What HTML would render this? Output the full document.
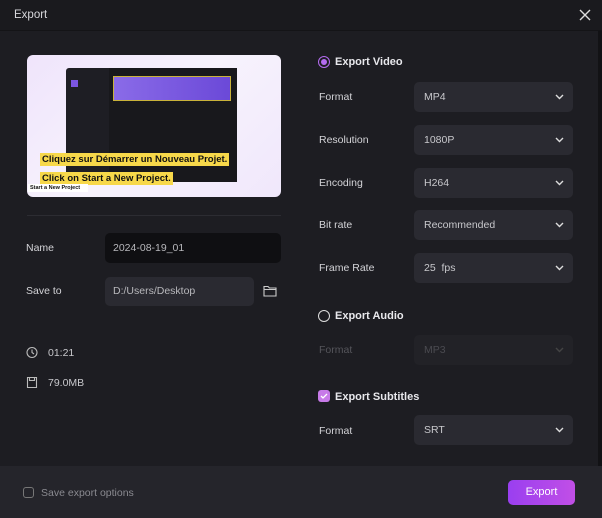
<!DOCTYPE html>
<html><head><meta charset="utf-8"><style>
*{margin:0;padding:0;box-sizing:border-box}
body{width:602px;height:518px;background:#1d1d22;font-family:"Liberation Sans",sans-serif;position:relative;overflow:hidden;color:#d8d8dc;font-size:11px}
.a{position:absolute}
.title{left:0;top:0;width:602px;height:31px;background:#1a1a1e;border-bottom:1px solid #141417}
.lbl{color:#d4d4d8;font-size:10.5px}
.dd{background:#2a2a31;border-radius:5px;height:30px;width:159px;left:414px;color:#c8c8cc;font-size:10.5px;padding:9px 10px}
.dd svg{position:absolute;right:9px;top:12px}
.sec{font-weight:bold;color:#e8e8ec;font-size:11px}
</style></head><body>
<div class="a title"></div>
<div class="a" style="left:14px;top:9px;font-size:11.5px;color:#d8d8dc">Export</div>
<svg class="a" style="left:579px;top:9px" width="12" height="12"><path d="M1 1L11 11M11 1L1 11" stroke="#ddd" stroke-width="1.4"/></svg>
<div class="a" style="left:598px;top:31px;width:4px;height:435px;background:#121215"></div>
<!-- preview -->
<div class="a" style="left:27px;top:55px;width:254px;height:142px;border-radius:6px;background:linear-gradient(135deg,#efe4fb,#f7f3fd 50%,#f0e7fb);overflow:hidden">
 <div class="a" style="left:39px;top:13px;width:171px;height:114px;background:#1e1e24;border-radius:3px">
  <div class="a" style="left:43px;top:0;width:128px;height:114px;background:#18181c"></div>
  <div class="a" style="left:47px;top:8px;width:118px;height:25px;background:linear-gradient(90deg,#8a6be8,#6b49d8);border:1px solid #c9b23a"></div>
  <div class="a" style="left:5px;top:12px;width:7px;height:7px;background:#7b55e0"></div>
 </div>
 <div class="a" style="left:13px;top:98px;background:#f7d84a;color:#111;font-weight:bold;font-size:9.5px;padding:1px 2px;white-space:nowrap">Cliquez sur Démarrer un Nouveau Projet.</div>
 <div class="a" style="left:13px;top:117px;background:#f7d84a;color:#111;font-weight:bold;font-size:9.5px;padding:1px 2px;white-space:nowrap">Click on Start a New Project.</div>
 <div class="a" style="left:1px;top:129px;background:#fff;color:#111;font-weight:bold;font-size:5.5px;padding:1px 2px;width:60px">Start a New Project</div>
</div>
<div class="a" style="left:27px;top:215px;width:254px;height:1px;background:#2c2c32"></div>
<div class="a lbl" style="left:26px;top:242px">Name</div>
<div class="a" style="left:105px;top:233px;width:176px;height:30px;background:#0f0f12;border-radius:5px;color:#b8b8bc;font-size:10.5px;padding:9px 8px">2024-08-19_01</div>
<div class="a lbl" style="left:26px;top:285px">Save to</div>
<div class="a" style="left:105px;top:277px;width:149px;height:29px;background:#2a2a31;border-radius:5px;color:#b8b8bc;font-size:10.5px;padding:8px 8px">D:/Users/Desktop</div>
<svg class="a" style="left:263px;top:284px" width="14" height="13"><path d="M1 2.5h4l1.5 1.5H13v8H1z M1 5.5h12" fill="none" stroke="#ccc" stroke-width="1.1"/></svg>
<svg class="a" style="left:26px;top:346px" width="12" height="13"><circle cx="6" cy="6.5" r="5" fill="none" stroke="#bbb" stroke-width="1.1"/><path d="M6 3.5v3l2 1.5" fill="none" stroke="#bbb" stroke-width="1.1"/></svg>
<div class="a" style="left:48px;top:347px;font-size:10.5px;color:#c8c8cc">01:21</div>
<svg class="a" style="left:26px;top:376px" width="12" height="13"><path d="M1.5 1.5h9v10h-9z M3.5 1.5v3h5v-3" fill="none" stroke="#bbb" stroke-width="1.1"/></svg>
<div class="a" style="left:48px;top:377px;font-size:10.5px;color:#c8c8cc">79.0MB</div>
<!-- right -->
<div class="a" style="left:318px;top:56px;width:12px;height:12px;border-radius:50%;border:1.5px solid #b46cf0"><div style="margin:1.5px;width:6px;height:6px;border-radius:50%;background:#b46cf0"></div></div>
<div class="a sec" style="left:335px;top:56px">Export Video</div>
<div class="a lbl" style="left:319px;top:91px">Format</div>
<div class="a dd" style="top:82px">MP4<svg width="9" height="6"><path d="M1 1l3.5 3.5L8 1" fill="none" stroke="#ddd" stroke-width="1.4"/></svg></div>
<div class="a lbl" style="left:319px;top:134px">Resolution</div>
<div class="a dd" style="top:125px">1080P<svg width="9" height="6"><path d="M1 1l3.5 3.5L8 1" fill="none" stroke="#ddd" stroke-width="1.4"/></svg></div>
<div class="a lbl" style="left:319px;top:177px">Encoding</div>
<div class="a dd" style="top:168px">H264<svg width="9" height="6"><path d="M1 1l3.5 3.5L8 1" fill="none" stroke="#ddd" stroke-width="1.4"/></svg></div>
<div class="a lbl" style="left:319px;top:219px">Bit rate</div>
<div class="a dd" style="top:210px">Recommended<svg width="9" height="6"><path d="M1 1l3.5 3.5L8 1" fill="none" stroke="#ddd" stroke-width="1.4"/></svg></div>
<div class="a lbl" style="left:319px;top:262px">Frame Rate</div>
<div class="a dd" style="top:253px">25&nbsp; fps<svg width="9" height="6"><path d="M1 1l3.5 3.5L8 1" fill="none" stroke="#ddd" stroke-width="1.4"/></svg></div>
<div class="a" style="left:318px;top:310px;width:12px;height:12px;border-radius:50%;border:1.5px solid #ddd"></div>
<div class="a sec" style="left:335px;top:310px">Export Audio</div>
<div class="a lbl" style="left:319px;top:344px;color:#55555b">Format</div>
<div class="a dd" style="top:335px;background:#222227;color:#4a4a50">MP3<svg width="9" height="6"><path d="M1 1l3.5 3.5L8 1" fill="none" stroke="#444" stroke-width="1.4"/></svg></div>
<div class="a" style="left:318px;top:390px;width:12px;height:12px;border-radius:3px;background:#c77ae8"><svg width="12" height="12"><path d="M3 6l2 2 4-4" fill="none" stroke="#fff" stroke-width="1.3"/></svg></div>
<div class="a sec" style="left:335px;top:391px">Export Subtitles</div>
<div class="a lbl" style="left:319px;top:425px">Format</div>
<div class="a dd" style="top:415px">SRT<svg width="9" height="6"><path d="M1 1l3.5 3.5L8 1" fill="none" stroke="#ddd" stroke-width="1.4"/></svg></div>
<!-- footer -->
<div class="a" style="left:0;top:466px;width:602px;height:52px;background:#25252b"></div>
<div class="a" style="left:23px;top:487px;width:11px;height:11px;border:1.2px solid #777;border-radius:3px"></div>
<div class="a" style="left:41px;top:487px;font-size:10.5px;color:#8a8a90">Save export options</div>
<div class="a" style="left:508px;top:480px;width:67px;height:25px;border-radius:5px;background:linear-gradient(90deg,#9a3ff0,#c14fe6);color:#fff;font-size:11px;text-align:center;line-height:25px">Export</div>
</body></html>
